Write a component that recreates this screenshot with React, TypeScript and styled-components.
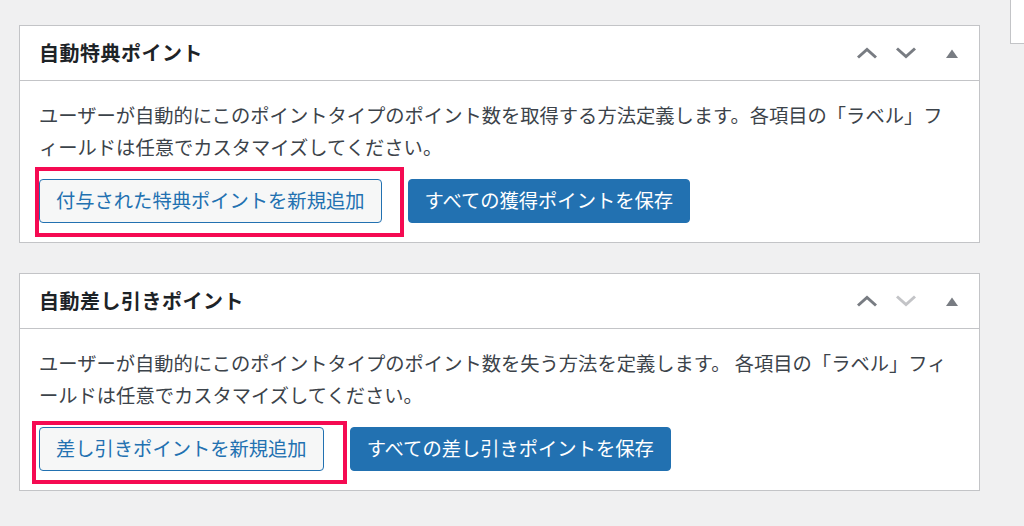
import React from "react";
import styled, { createGlobalStyle } from "styled-components";

const GlobalStyle = createGlobalStyle`
  html, body {
    margin: 0;
    padding: 0;
    background: #f0f0f1;
    overflow: hidden;
  }
  body {
    font-family: "Noto Sans CJK JP", "Noto Sans", sans-serif;
    color: #3c434a;
  }
`;

const Page = styled.div`
  display: flex;
  align-items: flex-start;
  gap: 30px;
  padding-left: 19px;
`;

const Main = styled.main`
  flex: 0 0 961px;
  width: 961px;
  padding-top: 25px;
  display: flex;
  flex-direction: column;
  gap: 30px;
`;

const SideBox = styled.aside`
  flex: 0 0 14px;
  height: 45px;
  margin-top: -1px;
  background: #fff;
  border: 1px solid #c3c4c7;
  border-right: none;
  box-sizing: border-box;
`;

const Panel = styled.section`
  background: #fff;
  border: 1px solid #c3c4c7;
`;

const PanelHeader = styled.div`
  display: flex;
  align-items: center;
  justify-content: space-between;
  height: 54px;
  padding-left: 19px;
  border-bottom: 1px solid #c3c4c7;
`;

const Title = styled.h2`
  margin: 0;
  font-size: 20px;
  font-weight: 700;
  letter-spacing: 0.5px;
  color: #1d2327;
  line-height: 1;
`;

const Controls = styled.div`
  display: flex;
  align-items: center;
  height: 100%;
`;

const HandleButton = styled.button<{ $w: number; $disabled?: boolean }>`
  width: ${(p) => p.$w}px;
  height: 100%;
  padding: 0;
  border: 0;
  background: transparent;
  display: flex;
  align-items: center;
  justify-content: center;
  color: ${(p) => (p.$disabled ? "#c3c4c7" : "#787c82")};
  cursor: pointer;
`;

const Body = styled.div`
  padding: 18px 19px 19px;
`;

const Description = styled.p`
  margin: 0 0 16px;
  font-size: 19.3px;
  line-height: 32px;
  color: #3c434a;
  white-space: nowrap;
`;

const ButtonRow = styled.div`
  display: flex;
  align-items: center;
  gap: 26px;
`;

const HighlightWrap = styled.div`
  position: relative;
  display: flex;
`;

const Highlight = styled.span<{ $t: number; $l: number; $r: number; $b: number }>`
  position: absolute;
  top: ${(p) => p.$t}px;
  left: ${(p) => p.$l}px;
  right: ${(p) => p.$r}px;
  bottom: ${(p) => p.$b}px;
  border: 4px solid #f50a52;
  pointer-events: none;
`;

const Button = styled.button<{ $primary?: boolean }>`
  height: 44px;
  padding: 0 16px;
  border-radius: 4px;
  border: 1px solid #2271b1;
  background: ${(p) => (p.$primary ? "#2271b1" : "#f6f7f7")};
  color: ${(p) => (p.$primary ? "#ffffff" : "#2271b1")};
  font-family: "Noto Sans CJK JP", "Noto Sans", sans-serif;
  font-size: 19.3px;
  line-height: 1;
  white-space: nowrap;
  cursor: pointer;
`;

const ChevronUp = () => (
  <svg width="22" height="12" viewBox="0 0 22 12" fill="none">
    <polyline points="2,10.5 11,2.5 20,10.5" stroke="currentColor" strokeWidth="3" />
  </svg>
);

const ChevronDown = () => (
  <svg width="22" height="12" viewBox="0 0 22 12" fill="none">
    <polyline points="2,1.5 11,9.5 20,1.5" stroke="currentColor" strokeWidth="3" />
  </svg>
);

const Triangle = () => (
  <svg width="12" height="9" viewBox="0 0 12 9">
    <polygon points="0,9 6,0.5 12,9" fill="currentColor" />
  </svg>
);

type Hl = { t: number; l: number; r: number; b: number };

type PanelProps = {
  title: string;
  line1: string;
  line2: string;
  addLabel: string;
  saveLabel: string;
  downDisabled?: boolean;
  hl: Hl;
};

const PointPanel = ({ title, line1, line2, addLabel, saveLabel, downDisabled, hl }: PanelProps) => (
  <Panel>
    <PanelHeader>
      <Title>{title}</Title>
      <Controls>
        <HandleButton $w={39} aria-label="上へ移動">
          <ChevronUp />
        </HandleButton>
        <HandleButton $w={39} $disabled={downDisabled} aria-label="下へ移動">
          <ChevronDown />
        </HandleButton>
        <HandleButton $w={54} aria-label="パネルを切り替え">
          <Triangle />
        </HandleButton>
      </Controls>
    </PanelHeader>
    <Body>
      <Description>
        {line1}
        <br />
        {line2}
      </Description>
      <ButtonRow>
        <HighlightWrap>
          <Button>{addLabel}</Button>
          <Highlight $t={hl.t} $l={hl.l} $r={hl.r} $b={hl.b} />
        </HighlightWrap>
        <Button $primary>{saveLabel}</Button>
      </ButtonRow>
    </Body>
  </Panel>
);

export default function App() {
  return (
    <>
      <GlobalStyle />
      <Page>
        <Main>
          <PointPanel
            title="自動特典ポイント"
            line1="ユーザーが自動的にこのポイントタイプのポイント数を取得する方法定義します。各項目の「ラベル」フ"
            line2="ィールドは任意でカスタマイズしてください。"
            addLabel="付与された特典ポイントを新規追加"
            saveLabel="すべての獲得ポイントを保存"
            hl={{ t: -12, l: -4, r: -22, b: -14 }}
          />
          <PointPanel
            title="自動差し引きポイント"
            line1="ユーザーが自動的にこのポイントタイプのポイント数を失う方法を定義します。 各項目の「ラベル」フィ"
            line2="ールドは任意でカスタマイズしてください。"
            addLabel="差し引きポイントを新規追加"
            saveLabel="すべての差し引きポイントを保存"
            downDisabled
            hl={{ t: -6, l: -7, r: -23, b: -13 }}
          />
        </Main>
        <SideBox />
      </Page>
    </>
  );
}
